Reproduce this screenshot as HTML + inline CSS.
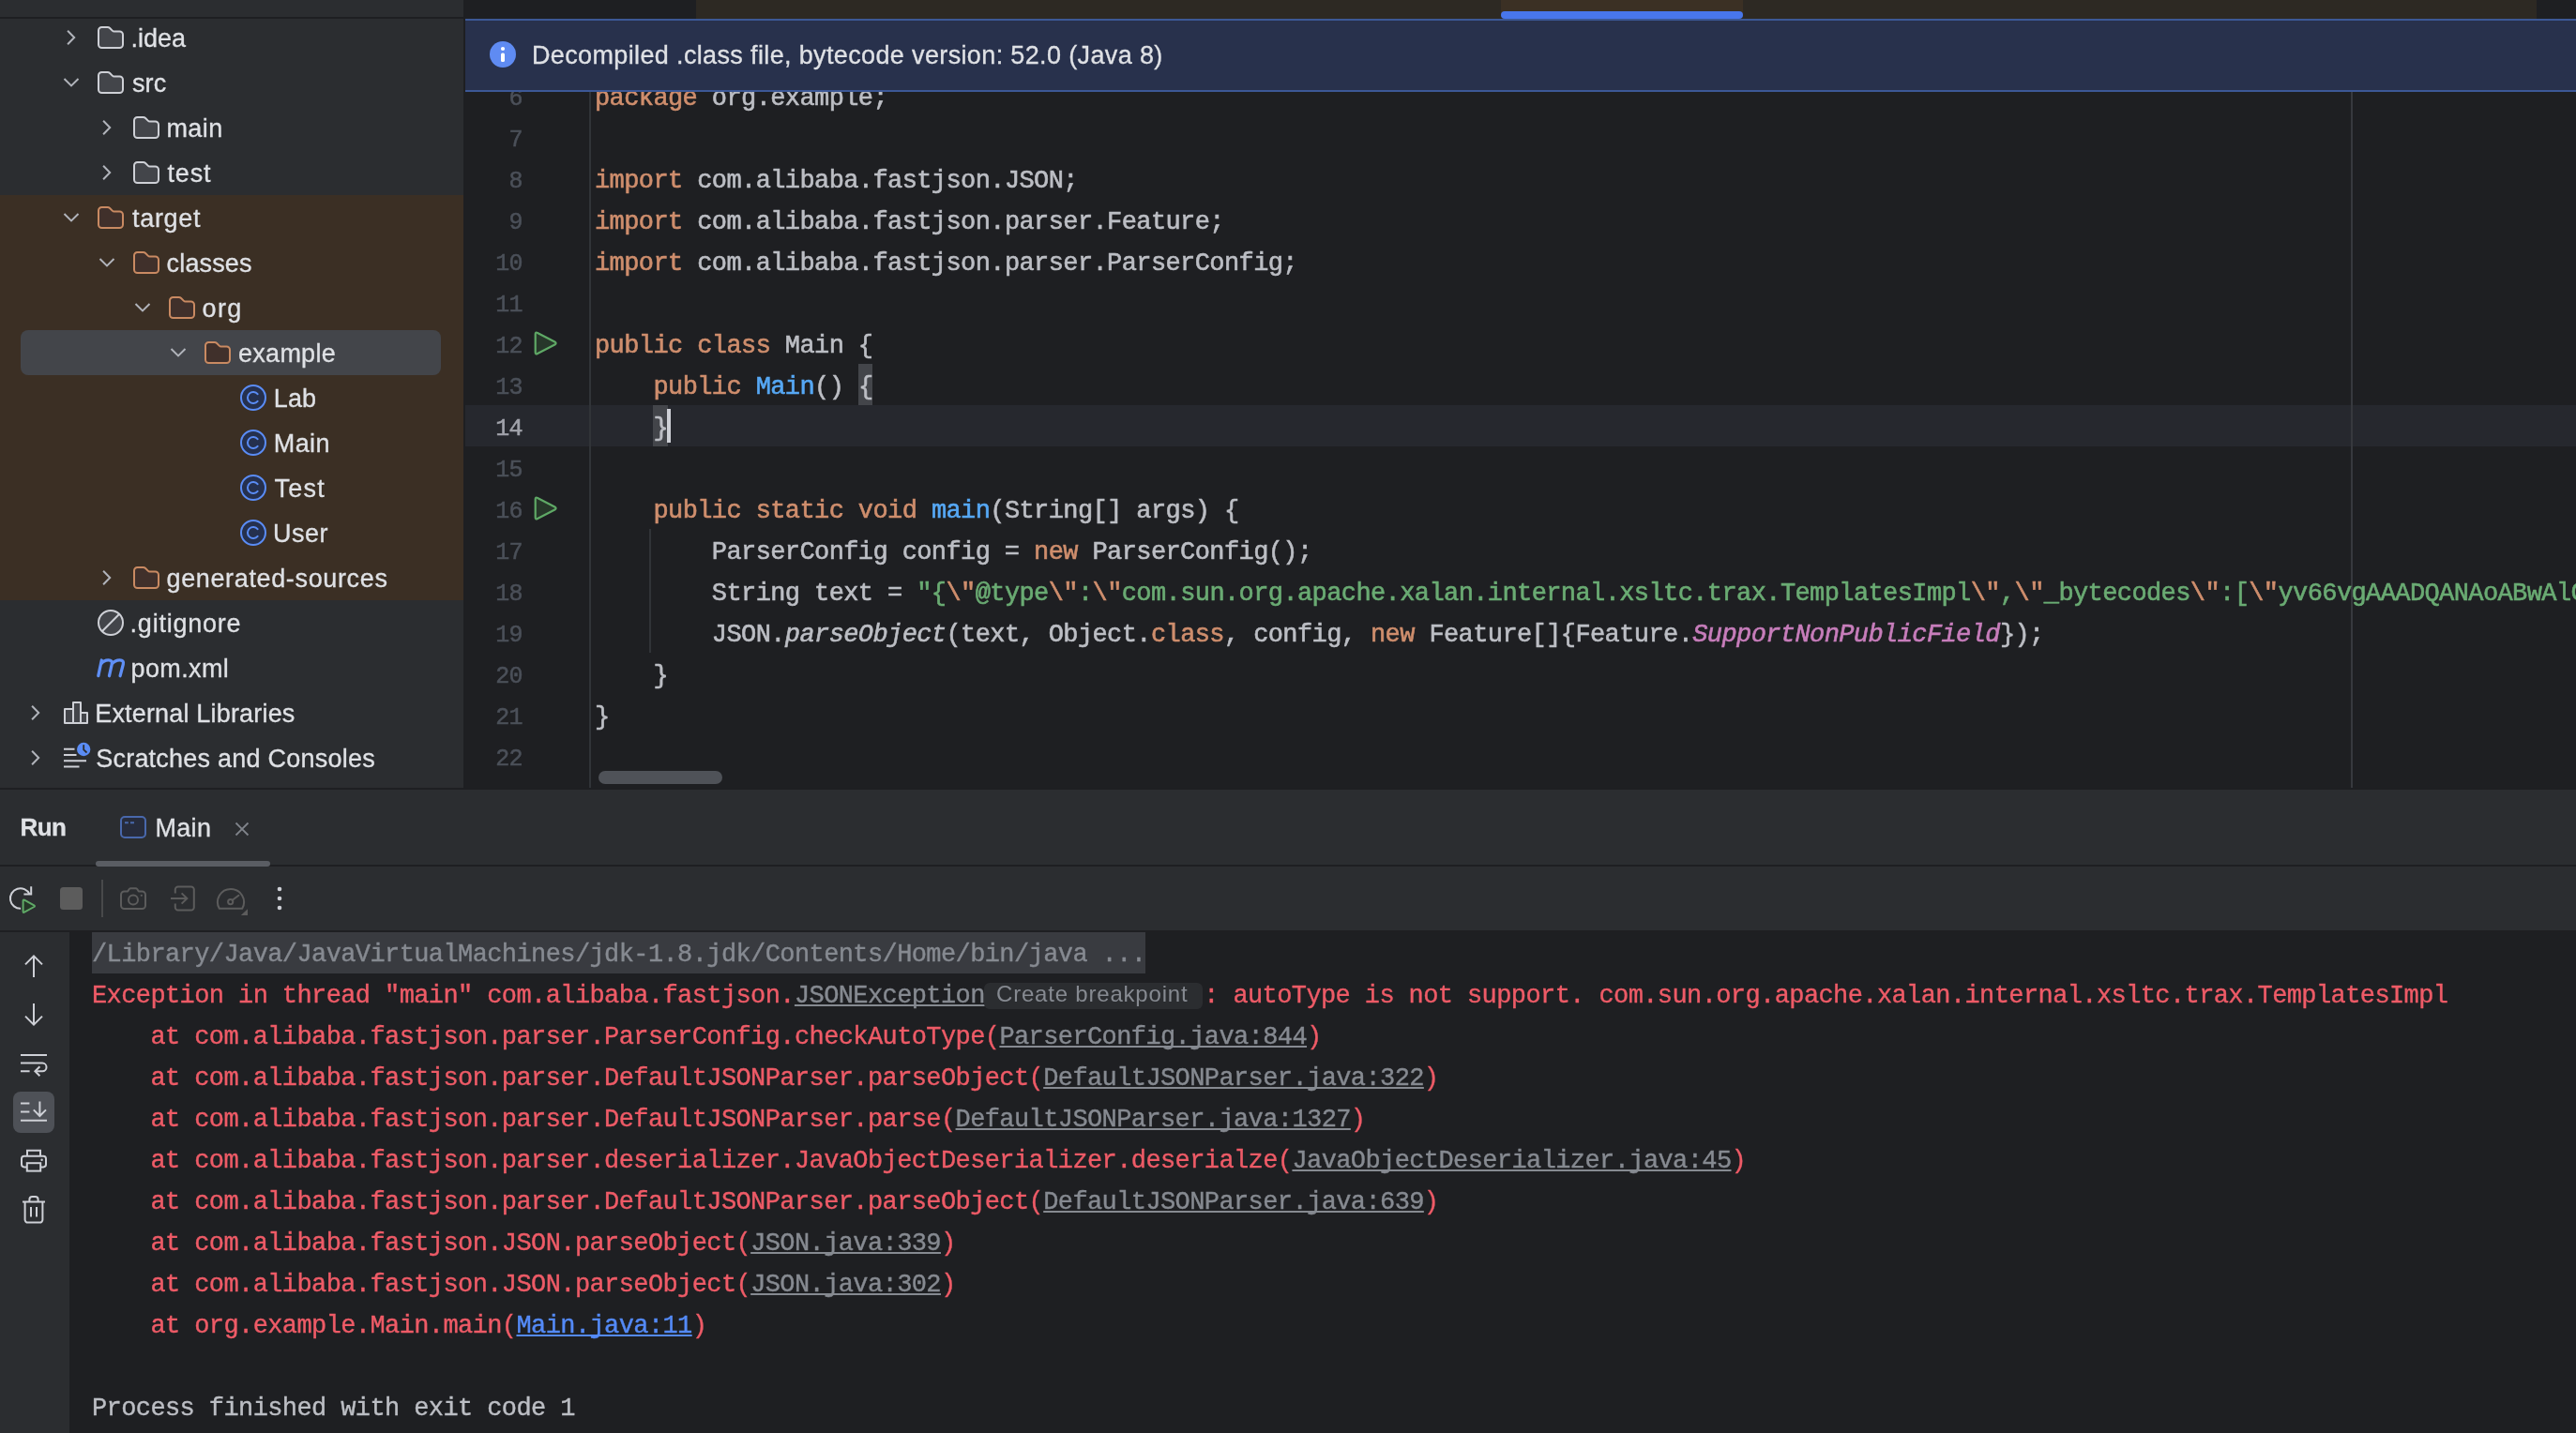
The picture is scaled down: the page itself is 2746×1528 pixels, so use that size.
<!DOCTYPE html><html><head><meta charset="utf-8"><title>IDE</title><style>
*{margin:0;padding:0;box-sizing:border-box}
html,body{width:2746px;height:1528px;overflow:hidden;background:#1e1f22}
body{position:relative;font-family:"Liberation Sans",sans-serif;color:#dfe1e5}
.abs{position:absolute}
.ui{font-family:"Liberation Sans",sans-serif;font-size:27px;-webkit-text-stroke:0.3px;color:#dfe1e5;white-space:pre;position:absolute;height:48px;line-height:48px}
svg{position:absolute;overflow:visible}
.cl{position:absolute;left:634px;height:44px;line-height:50px;font-family:"Liberation Mono",monospace;font-size:27px;letter-spacing:-0.6px;-webkit-text-stroke:0.6px;white-space:pre;color:#bcbec4}
.ln{position:absolute;left:496px;width:61px;text-align:right;height:44px;line-height:51.6px;font-family:"Liberation Mono",monospace;font-size:25px;letter-spacing:-0.6px;-webkit-text-stroke:0.5px;color:#4b5059;white-space:pre}
.k{color:#cf8e6d}.s{color:#6aab73}.f{color:#56a8f5}.p{color:#c77dbb;font-style:italic}.i{font-style:italic}
.co{position:absolute;left:98px;height:44px;line-height:49px;font-family:"Liberation Mono",monospace;font-size:27px;letter-spacing:-0.6px;-webkit-text-stroke:0.4px;white-space:pre;color:#ee5b67}
.lk{color:#868a91;text-decoration:underline;text-decoration-thickness:2px;text-underline-offset:2px;text-decoration-skip-ink:none}
.lb{color:#548af7;text-decoration:underline;text-decoration-thickness:2px;text-underline-offset:2px;text-decoration-skip-ink:none}
</style></head><body><div id="root" style="position:absolute;left:0;top:0;width:2746px;height:1528px;will-change:transform">
<div class="abs" style="left:0px;top:0px;width:494px;height:840px;background:#2b2d30;"></div>
<div class="abs" style="left:0px;top:18px;width:494px;height:2px;background:#1e1f22;"></div>
<div class="abs" style="left:0px;top:208px;width:494px;height:432px;background:#3b2f24;"></div>
<div class="abs" style="left:22px;top:352px;width:448px;height:48px;background:#43454a;border-radius:8px"></div>
<svg style="left:69.5px;top:30px" width="12" height="20" viewBox="0 0 12 20" ><path d="M2.1 2.7 L9.2 10 L2.1 17.3" fill="none" stroke="#b1b4bb" stroke-width="2" stroke-linecap="butt" stroke-linejoin="miter"/></svg>
<svg style="left:104px;top:28px" width="28" height="24" viewBox="0 0 28 24" ><path d="M1 4.5 A3.5 3.5 0 0 1 4.5 1 H10.6 A3.5 3.5 0 0 1 13.1 2 L15.7 4.6 A3 3 0 0 0 17.8 5.5 H23.5 A3.5 3.5 0 0 1 27 9 V19.5 A3.5 3.5 0 0 1 23.5 23 H4.5 A3.5 3.5 0 0 1 1 19.5 Z" fill="#43454a" stroke="#ced0d6" stroke-width="2" stroke-linejoin="round"/></svg>
<div class="ui" style="left:139.4px;top:17px;letter-spacing:0px;">.idea</div>
<svg style="left:66px;top:82px" width="20" height="12" viewBox="0 0 20 12" ><path d="M2.5 2 L10 9.4 L17.5 2" fill="none" stroke="#b1b4bb" stroke-width="2" stroke-linecap="butt" stroke-linejoin="miter"/></svg>
<svg style="left:104px;top:76px" width="28" height="24" viewBox="0 0 28 24" ><path d="M1 4.5 A3.5 3.5 0 0 1 4.5 1 H10.6 A3.5 3.5 0 0 1 13.1 2 L15.7 4.6 A3 3 0 0 0 17.8 5.5 H23.5 A3.5 3.5 0 0 1 27 9 V19.5 A3.5 3.5 0 0 1 23.5 23 H4.5 A3.5 3.5 0 0 1 1 19.5 Z" fill="#43454a" stroke="#ced0d6" stroke-width="2" stroke-linejoin="round"/></svg>
<div class="ui" style="left:141px;top:65px;letter-spacing:0.1px;">src</div>
<svg style="left:107.5px;top:126px" width="12" height="20" viewBox="0 0 12 20" ><path d="M2.1 2.7 L9.2 10 L2.1 17.3" fill="none" stroke="#b1b4bb" stroke-width="2" stroke-linecap="butt" stroke-linejoin="miter"/></svg>
<svg style="left:142px;top:124px" width="28" height="24" viewBox="0 0 28 24" ><path d="M1 4.5 A3.5 3.5 0 0 1 4.5 1 H10.6 A3.5 3.5 0 0 1 13.1 2 L15.7 4.6 A3 3 0 0 0 17.8 5.5 H23.5 A3.5 3.5 0 0 1 27 9 V19.5 A3.5 3.5 0 0 1 23.5 23 H4.5 A3.5 3.5 0 0 1 1 19.5 Z" fill="#43454a" stroke="#ced0d6" stroke-width="2" stroke-linejoin="round"/></svg>
<div class="ui" style="left:177.4px;top:113px;letter-spacing:0.47px;">main</div>
<svg style="left:107.5px;top:174px" width="12" height="20" viewBox="0 0 12 20" ><path d="M2.1 2.7 L9.2 10 L2.1 17.3" fill="none" stroke="#b1b4bb" stroke-width="2" stroke-linecap="butt" stroke-linejoin="miter"/></svg>
<svg style="left:142px;top:172px" width="28" height="24" viewBox="0 0 28 24" ><path d="M1 4.5 A3.5 3.5 0 0 1 4.5 1 H10.6 A3.5 3.5 0 0 1 13.1 2 L15.7 4.6 A3 3 0 0 0 17.8 5.5 H23.5 A3.5 3.5 0 0 1 27 9 V19.5 A3.5 3.5 0 0 1 23.5 23 H4.5 A3.5 3.5 0 0 1 1 19.5 Z" fill="#43454a" stroke="#ced0d6" stroke-width="2" stroke-linejoin="round"/></svg>
<div class="ui" style="left:178.4px;top:161px;letter-spacing:0.87px;">test</div>
<svg style="left:66px;top:226px" width="20" height="12" viewBox="0 0 20 12" ><path d="M2.5 2 L10 9.4 L17.5 2" fill="none" stroke="#b1b4bb" stroke-width="2" stroke-linecap="butt" stroke-linejoin="miter"/></svg>
<svg style="left:104px;top:220px" width="28" height="24" viewBox="0 0 28 24" ><path d="M1 4.5 A3.5 3.5 0 0 1 4.5 1 H10.6 A3.5 3.5 0 0 1 13.1 2 L15.7 4.6 A3 3 0 0 0 17.8 5.5 H23.5 A3.5 3.5 0 0 1 27 9 V19.5 A3.5 3.5 0 0 1 23.5 23 H4.5 A3.5 3.5 0 0 1 1 19.5 Z" fill="#40302b" stroke="#c98a62" stroke-width="2" stroke-linejoin="round"/></svg>
<div class="ui" style="left:141px;top:209px;letter-spacing:0.68px;">target</div>
<svg style="left:104px;top:274px" width="20" height="12" viewBox="0 0 20 12" ><path d="M2.5 2 L10 9.4 L17.5 2" fill="none" stroke="#b1b4bb" stroke-width="2" stroke-linecap="butt" stroke-linejoin="miter"/></svg>
<svg style="left:142px;top:268px" width="28" height="24" viewBox="0 0 28 24" ><path d="M1 4.5 A3.5 3.5 0 0 1 4.5 1 H10.6 A3.5 3.5 0 0 1 13.1 2 L15.7 4.6 A3 3 0 0 0 17.8 5.5 H23.5 A3.5 3.5 0 0 1 27 9 V19.5 A3.5 3.5 0 0 1 23.5 23 H4.5 A3.5 3.5 0 0 1 1 19.5 Z" fill="#40302b" stroke="#c98a62" stroke-width="2" stroke-linejoin="round"/></svg>
<div class="ui" style="left:177.6px;top:257px;letter-spacing:0.15px;">classes</div>
<svg style="left:142px;top:322px" width="20" height="12" viewBox="0 0 20 12" ><path d="M2.5 2 L10 9.4 L17.5 2" fill="none" stroke="#b1b4bb" stroke-width="2" stroke-linecap="butt" stroke-linejoin="miter"/></svg>
<svg style="left:180px;top:316px" width="28" height="24" viewBox="0 0 28 24" ><path d="M1 4.5 A3.5 3.5 0 0 1 4.5 1 H10.6 A3.5 3.5 0 0 1 13.1 2 L15.7 4.6 A3 3 0 0 0 17.8 5.5 H23.5 A3.5 3.5 0 0 1 27 9 V19.5 A3.5 3.5 0 0 1 23.5 23 H4.5 A3.5 3.5 0 0 1 1 19.5 Z" fill="#40302b" stroke="#c98a62" stroke-width="2" stroke-linejoin="round"/></svg>
<div class="ui" style="left:215.5px;top:305px;letter-spacing:1.4px;">org</div>
<svg style="left:180px;top:370px" width="20" height="12" viewBox="0 0 20 12" ><path d="M2.5 2 L10 9.4 L17.5 2" fill="none" stroke="#b1b4bb" stroke-width="2" stroke-linecap="butt" stroke-linejoin="miter"/></svg>
<svg style="left:218px;top:364px" width="28" height="24" viewBox="0 0 28 24" ><path d="M1 4.5 A3.5 3.5 0 0 1 4.5 1 H10.6 A3.5 3.5 0 0 1 13.1 2 L15.7 4.6 A3 3 0 0 0 17.8 5.5 H23.5 A3.5 3.5 0 0 1 27 9 V19.5 A3.5 3.5 0 0 1 23.5 23 H4.5 A3.5 3.5 0 0 1 1 19.5 Z" fill="#40302b" stroke="#c98a62" stroke-width="2" stroke-linejoin="round"/></svg>
<div class="ui" style="left:254.1px;top:353px;letter-spacing:0.25px;">example</div>
<svg style="left:256px;top:410px" width="28" height="28" viewBox="0 0 28 28" ><circle cx="14" cy="14" r="13" fill="#25304e" stroke="#5a8cf5" stroke-width="2"/><path d="M18.6 10.2 A6 6 0 1 0 18.6 17.8" fill="none" stroke="#5a8cf5" stroke-width="2" stroke-linecap="round"/></svg>
<div class="ui" style="left:291.7px;top:401px;letter-spacing:0.2px;">Lab</div>
<svg style="left:256px;top:458px" width="28" height="28" viewBox="0 0 28 28" ><circle cx="14" cy="14" r="13" fill="#25304e" stroke="#5a8cf5" stroke-width="2"/><path d="M18.6 10.2 A6 6 0 1 0 18.6 17.8" fill="none" stroke="#5a8cf5" stroke-width="2" stroke-linecap="round"/></svg>
<div class="ui" style="left:291.7px;top:449px;letter-spacing:0.45px;">Main</div>
<svg style="left:256px;top:506px" width="28" height="28" viewBox="0 0 28 28" ><circle cx="14" cy="14" r="13" fill="#25304e" stroke="#5a8cf5" stroke-width="2"/><path d="M18.6 10.2 A6 6 0 1 0 18.6 17.8" fill="none" stroke="#5a8cf5" stroke-width="2" stroke-linecap="round"/></svg>
<div class="ui" style="left:292.5px;top:497px;letter-spacing:1.23px;">Test</div>
<svg style="left:256px;top:554px" width="28" height="28" viewBox="0 0 28 28" ><circle cx="14" cy="14" r="13" fill="#25304e" stroke="#5a8cf5" stroke-width="2"/><path d="M18.6 10.2 A6 6 0 1 0 18.6 17.8" fill="none" stroke="#5a8cf5" stroke-width="2" stroke-linecap="round"/></svg>
<div class="ui" style="left:291px;top:545px;letter-spacing:0.5px;">User</div>
<svg style="left:107.5px;top:606px" width="12" height="20" viewBox="0 0 12 20" ><path d="M2.1 2.7 L9.2 10 L2.1 17.3" fill="none" stroke="#b1b4bb" stroke-width="2" stroke-linecap="butt" stroke-linejoin="miter"/></svg>
<svg style="left:142px;top:604px" width="28" height="24" viewBox="0 0 28 24" ><path d="M1 4.5 A3.5 3.5 0 0 1 4.5 1 H10.6 A3.5 3.5 0 0 1 13.1 2 L15.7 4.6 A3 3 0 0 0 17.8 5.5 H23.5 A3.5 3.5 0 0 1 27 9 V19.5 A3.5 3.5 0 0 1 23.5 23 H4.5 A3.5 3.5 0 0 1 1 19.5 Z" fill="#40302b" stroke="#c98a62" stroke-width="2" stroke-linejoin="round"/></svg>
<div class="ui" style="left:177.5px;top:593px;letter-spacing:0.64px;">generated-sources</div>
<svg style="left:104px;top:650px" width="28" height="28" viewBox="0 0 28 28" ><circle cx="14" cy="14" r="13" fill="#43454a" stroke="#ced0d6" stroke-width="2"/><path d="M4.8 23.2 L23.2 4.8" stroke="#ced0d6" stroke-width="2"/></svg>
<div class="ui" style="left:138.6px;top:641px;letter-spacing:0.76px;">.gitignore</div>
<svg style="left:102px;top:700px" width="34" height="24" viewBox="0 0 34 24" ><path d="M2.8 20.7 L6.3 4 M5.5 8.2 C7.5 5.4 10.5 3.8 13.6 3.8 C16.6 3.8 17.9 5.5 17.2 8.4 L14.5 20.7 M17.3 8 C19.3 5.4 22.5 3.8 25.7 3.8 C28.8 3.8 30 5.5 29.3 8.4 L26.1 20.7" fill="none" stroke="#5f8ff6" stroke-width="3.3" stroke-linecap="round" stroke-linejoin="round"/></svg>
<div class="ui" style="left:139.6px;top:689px;letter-spacing:0.37px;">pom.xml</div>
<svg style="left:31.5px;top:750px" width="12" height="20" viewBox="0 0 12 20" ><path d="M2.1 2.7 L9.2 10 L2.1 17.3" fill="none" stroke="#b1b4bb" stroke-width="2" stroke-linecap="butt" stroke-linejoin="miter"/></svg>
<svg style="left:68px;top:748px" width="26" height="24" viewBox="0 0 26 24" ><path d="M1 8 H10 V23 H1 Z M10 1 H18 V23 H10 Z M18 12 H25 V23 H18 Z" fill="#43454a" stroke="#ced0d6" stroke-width="2" stroke-linejoin="round"/></svg>
<div class="ui" style="left:101.2px;top:737px;letter-spacing:0.18px;">External Libraries</div>
<svg style="left:31.5px;top:798px" width="12" height="20" viewBox="0 0 12 20" ><path d="M2.1 2.7 L9.2 10 L2.1 17.3" fill="none" stroke="#b1b4bb" stroke-width="2" stroke-linecap="butt" stroke-linejoin="miter"/></svg>
<svg style="left:68px;top:790px" width="30" height="30" viewBox="0 0 30 30" ><path d="M0 8.8 H11.5 M0 15 H13.5 M0 21.2 H24 M0 27.4 H16.5" stroke="#ced0d6" stroke-width="2" fill="none"/><circle cx="21.2" cy="9" r="7.2" fill="#5a8cf5"/><path d="M21.2 4.8 V9.4 L24 12" stroke="#2b2d30" stroke-width="1.8" fill="none" stroke-linecap="round"/></svg>
<div class="ui" style="left:102.2px;top:785px;letter-spacing:0.23px;">Scratches and Consoles</div>
<div class="abs" style="left:494px;top:0px;width:2252px;height:840px;background:#1e1f22;"></div>
<div class="abs" style="left:742px;top:0px;width:1962px;height:20px;background:#2d2923;"></div>
<div class="abs" style="left:1600px;top:0px;width:258px;height:14px;background:#3b3024;"></div>
<div class="abs" style="left:1600px;top:12px;width:258px;height:8px;background:#4876eb;border-radius:4px"></div>
<div class="abs" style="left:496px;top:432px;width:2250px;height:44px;background:#26282e;"></div>
<div class="abs" style="left:628px;top:98px;width:2px;height:742px;background:#313438;"></div>
<div class="abs" style="left:2506px;top:98px;width:2px;height:742px;background:#37393e;"></div>
<div class="abs" style="left:692px;top:564px;width:2px;height:132px;background:#313438;"></div>
<div class="abs" style="left:914.8px;top:388px;width:15.6px;height:44px;background:#43454a;"></div>
<div class="abs" style="left:696.4px;top:432px;width:15.6px;height:44px;background:#43454a;"></div>
<div class="abs" style="left:496px;top:80px;width:2250px;height:760px;overflow:hidden">
<div class="ln" style="left:0;top:0px">6</div>
<div class="cl" style="left:138px;top:0px"><span class="k">package</span> org.example;</div>
<div class="ln" style="left:0;top:44px">7</div>
<div class="ln" style="left:0;top:88px">8</div>
<div class="cl" style="left:138px;top:88px"><span class="k">import</span> com.alibaba.fastjson.JSON;</div>
<div class="ln" style="left:0;top:132px">9</div>
<div class="cl" style="left:138px;top:132px"><span class="k">import</span> com.alibaba.fastjson.parser.Feature;</div>
<div class="ln" style="left:0;top:176px">10</div>
<div class="cl" style="left:138px;top:176px"><span class="k">import</span> com.alibaba.fastjson.parser.ParserConfig;</div>
<div class="ln" style="left:0;top:220px">11</div>
<div class="ln" style="left:0;top:264px">12</div>
<div class="cl" style="left:138px;top:264px"><span class="k">public class</span> Main {</div>
<div class="ln" style="left:0;top:308px">13</div>
<div class="cl" style="left:138px;top:308px">    <span class="k">public</span> <span class="f">Main</span>() {</div>
<div class="ln" style="left:0;top:352px;color:#a1a3ab">14</div>
<div class="cl" style="left:138px;top:352px">    }</div>
<div class="ln" style="left:0;top:396px">15</div>
<div class="ln" style="left:0;top:440px">16</div>
<div class="cl" style="left:138px;top:440px">    <span class="k">public static void</span> <span class="f">main</span>(String[] args) {</div>
<div class="ln" style="left:0;top:484px">17</div>
<div class="cl" style="left:138px;top:484px">        ParserConfig config = <span class="k">new</span> ParserConfig();</div>
<div class="ln" style="left:0;top:528px">18</div>
<div class="cl" style="left:138px;top:528px">        String text = <span class="s">&quot;{</span><span class="k">\&quot;</span><span class="s">@type</span><span class="k">\&quot;</span><span class="s">:</span><span class="k">\&quot;</span><span class="s">com.sun.org.apache.xalan.internal.xsltc.trax.TemplatesImpl</span><span class="k">\&quot;</span><span class="s">,</span><span class="k">\&quot;</span><span class="s">_bytecodes</span><span class="k">\&quot;</span><span class="s">:[</span><span class="k">\&quot;</span><span class="s">yv66vgAAADQANAoABwAlCgAmACcHACgK</span></div>
<div class="ln" style="left:0;top:572px">19</div>
<div class="cl" style="left:138px;top:572px">        JSON.<span class="i">parseObject</span>(text, Object.<span class="k">class</span>, config, <span class="k">new</span> Feature[]{Feature.<span class="p">SupportNonPublicField</span>});</div>
<div class="ln" style="left:0;top:616px">20</div>
<div class="cl" style="left:138px;top:616px">    }</div>
<div class="ln" style="left:0;top:660px">21</div>
<div class="cl" style="left:138px;top:660px">}</div>
<div class="ln" style="left:0;top:704px">22</div>
</div>
<div class="abs" style="left:711px;top:436px;width:4px;height:36px;background:#ced0d6;"></div>
<svg style="left:569px;top:352px" width="26" height="28" viewBox="0 0 26 28" ><path d="M4 2.9 Q1.7 1.7 1.7 4.2 V23.8 Q1.7 26.3 4 25.1 L22.4 15.6 Q24.8 14 22.4 12.4 Z" fill="#27372a" stroke="#5fa966" stroke-width="2.2" stroke-linejoin="round"/></svg>
<svg style="left:569px;top:528px" width="26" height="28" viewBox="0 0 26 28" ><path d="M4 2.9 Q1.7 1.7 1.7 4.2 V23.8 Q1.7 26.3 4 25.1 L22.4 15.6 Q24.8 14 22.4 12.4 Z" fill="#27372a" stroke="#5fa966" stroke-width="2.2" stroke-linejoin="round"/></svg>
<div class="abs" style="left:638px;top:822px;width:132px;height:14px;background:#4f5258;border-radius:7px"></div>
<div class="abs" style="left:496px;top:20px;width:2250px;height:78px;background:#28314c;border-top:2px solid #3c5896;border-bottom:2px solid #3c5896"></div>
<svg style="left:522px;top:44px" width="28" height="28" viewBox="0 0 28 28" ><circle cx="14" cy="14" r="14" fill="#5f8bf2"/><circle cx="14" cy="8" r="2.1" fill="#fff"/><rect x="12" y="12.6" width="4" height="9.4" rx="1.6" fill="#fff"/></svg>
<div class="ui" style="left:567px;top:35px;letter-spacing:0.36px">Decompiled .class file, bytecode version: 52.0 (Java 8)</div>
<div class="abs" style="left:0px;top:840px;width:2746px;height:2px;background:#1e1f22;"></div>
<div class="abs" style="left:0px;top:842px;width:2746px;height:152px;background:#2b2d30;"></div>
<div class="abs" style="left:0px;top:922px;width:2746px;height:2px;background:#1e1f22;"></div>
<div class="abs" style="left:0px;top:992px;width:2746px;height:2px;background:#1e1f22;"></div>
<div class="abs" style="left:0px;top:994px;width:74px;height:534px;background:#2b2d30;"></div>
<div class="ui" style="left:21.5px;top:858px;font-weight:bold;font-size:26px;letter-spacing:-0.6px">Run</div>
<svg style="left:128px;top:870px" width="28" height="24" viewBox="0 0 28 24" ><rect x="1" y="1" width="26" height="22" rx="4" fill="#272c3c" stroke="#4968ac" stroke-width="2"/><path d="M5 7.2 H8.8 M11 7.2 H15" stroke="#4968ac" stroke-width="2"/></svg>
<div class="ui" style="left:165.5px;top:859px;letter-spacing:0.3px">Main</div>
<svg style="left:250px;top:876px" width="16" height="16" viewBox="0 0 16 16" ><path d="M1.5 1.5 L14.5 14.5 M14.5 1.5 L1.5 14.5" stroke="#80848b" stroke-width="1.8" fill="none"/></svg>
<div class="abs" style="left:102px;top:918px;width:186px;height:6px;background:#5a5d63;border-radius:3px"></div>
<svg style="left:8px;top:942px" width="34" height="34" viewBox="0 0 34 34" ><path d="M23.5 11.4 A10.8 10.8 0 1 0 14.1 26.8" fill="none" stroke="#ced0d6" stroke-width="2"/><path d="M17.4 11.4 H25.2 V3.2" fill="none" stroke="#ced0d6" stroke-width="2"/><path d="M18 17.7 Q16.6 17 16.6 18.6 V29.8 Q16.6 31.4 18 30.7 L28.3 25 Q29.6 24.2 28.3 23.4 Z" fill="#253627" stroke="#5fa966" stroke-width="2" stroke-linejoin="round"/></svg>
<div class="abs" style="left:64px;top:946px;width:24px;height:24px;background:#5c5c5c;border-radius:3.5px"></div>
<div class="abs" style="left:108px;top:938px;width:2px;height:40px;background:#48494b;"></div>
<svg style="left:128px;top:946px" width="28" height="24" viewBox="0 0 28 24" ><path d="M4.5 4.4 H8.2 L9.8 2 A2 2 0 0 1 11.4 1.2 H16.6 A2 2 0 0 1 18.2 2 L19.8 4.4 H23.5 A3.5 3.5 0 0 1 27 7.9 V19.5 A3.5 3.5 0 0 1 23.5 23 H4.5 A3.5 3.5 0 0 1 1 19.5 V7.9 A3.5 3.5 0 0 1 4.5 4.4 Z" fill="none" stroke="#5c5c5c" stroke-width="2" stroke-linejoin="round"/><circle cx="14" cy="13.6" r="5" fill="none" stroke="#5c5c5c" stroke-width="2"/><circle cx="22.8" cy="8.8" r="1.1" fill="#5c5c5c"/></svg>
<svg style="left:181px;top:944px" width="28" height="28" viewBox="0 0 28 28" ><path d="M5.8 8.5 V4.5 A3 3 0 0 1 8.8 1.5 H22.8 A3 3 0 0 1 25.8 4.5 V23.5 A3 3 0 0 1 22.8 26.5 H8.8 A3 3 0 0 1 5.8 23.5 V19.5" fill="none" stroke="#5c5c5c" stroke-width="2"/><path d="M1 14 H18 M12.6 8.4 L18.4 14 L12.6 19.6" fill="none" stroke="#5c5c5c" stroke-width="2"/></svg>
<svg style="left:230px;top:946px" width="36" height="32" viewBox="0 0 36 32" ><path d="M3.8 22.8 A14 14 0 1 1 28.2 22.8 Z" fill="none" stroke="#5c5c5c" stroke-width="2" stroke-linejoin="round"/><circle cx="15.7" cy="15.6" r="2.6" fill="none" stroke="#5c5c5c" stroke-width="2"/><path d="M17.8 13.8 L24.4 8.8" stroke="#5c5c5c" stroke-width="2" stroke-linecap="round"/><path d="M34 23.2 V30 H26.8 Z" fill="#5c5c5c"/></svg>
<svg style="left:294px;top:944px" width="8" height="28" viewBox="0 0 8 28" ><circle cx="4" cy="4" r="2.3" fill="#ced0d6"/><circle cx="4" cy="14" r="2.3" fill="#ced0d6"/><circle cx="4" cy="24" r="2.3" fill="#ced0d6"/></svg>
<svg style="left:24px;top:1017px" width="24" height="26" viewBox="0 0 24 26" ><path d="M12 25 V3 M3 11.4 L12 2.4 L21 11.4" fill="none" stroke="#ced0d6" stroke-width="2"/></svg>
<svg style="left:24px;top:1069px" width="24" height="26" viewBox="0 0 24 26" ><path d="M12 1 V23 M3 14.6 L12 23.6 L21 14.6" fill="none" stroke="#ced0d6" stroke-width="2"/></svg>
<svg style="left:21px;top:1122px" width="30" height="28" viewBox="0 0 30 28" ><path d="M1 3 H29 M1 20.2 H10.6" fill="none" stroke="#ced0d6" stroke-width="2"/><path d="M17 20.2 H24.2 A4.3 4.3 0 0 0 24.2 11.6 H1" fill="none" stroke="#ced0d6" stroke-width="2"/><path d="M21.4 15.2 L16.4 20.2 L21.4 25.2" fill="none" stroke="#ced0d6" stroke-width="2"/></svg>
<div class="abs" style="left:14px;top:1164px;width:44px;height:44px;background:#4e5157;border-radius:8px"></div>
<svg style="left:21px;top:1174px" width="30" height="24" viewBox="0 0 30 24" ><path d="M1 2.4 H10.4 M1 11.6 H10.4 M1 20.8 H29" fill="none" stroke="#ced0d6" stroke-width="2"/><path d="M21.4 0.6 V15.6 M14.8 9.4 L21.4 16 L28 9.4" fill="none" stroke="#ced0d6" stroke-width="2"/></svg>
<svg style="left:21px;top:1225px" width="30" height="26" viewBox="0 0 30 26" ><path d="M8 7.6 V1.8 H22 V7.6" fill="none" stroke="#ced0d6" stroke-width="2"/><path d="M7.6 19.4 H4.8 A2.8 2.8 0 0 1 2 16.6 V10.6 A2.8 2.8 0 0 1 4.8 7.8 H25.2 A2.8 2.8 0 0 1 28 10.6 V16.6 A2.8 2.8 0 0 1 25.2 19.4 H22.4" fill="none" stroke="#ced0d6" stroke-width="2"/><rect x="7.8" y="15.2" width="14.4" height="8.4" fill="none" stroke="#ced0d6" stroke-width="2"/><circle cx="23.6" cy="11.8" r="1.2" fill="#ced0d6"/></svg>
<svg style="left:23px;top:1275px" width="26" height="30" viewBox="0 0 26 30" ><path d="M1 6.4 H25 M8.4 6 V4 A3 3 0 0 1 11.4 1 H14.6 A3 3 0 0 1 17.6 4 V6" fill="none" stroke="#ced0d6" stroke-width="2"/><path d="M3.6 6.4 V25.6 A3 3 0 0 0 6.6 28.6 H19.4 A3 3 0 0 0 22.4 25.6 V6.4" fill="none" stroke="#ced0d6" stroke-width="2"/><path d="M10 12 V22.4 M16 12 V22.4" fill="none" stroke="#ced0d6" stroke-width="2"/></svg>
<div class="abs" style="left:98px;top:994px;width:1123px;height:44px;background:#393b40;"></div>
<div class="co" style="top:994px"><span style="color:#868a91">/Library/Java/JavaVirtualMachines/jdk-1.8.jdk/Contents/Home/bin/java ...</span></div>
<div class="co" style="top:1038px">Exception in thread &quot;main&quot; com.alibaba.fastjson.<span class="lk">JSONException</span><span style="display:inline-block;width:233.4px"></span>: autoType is not support. com.sun.org.apache.xalan.internal.xsltc.trax.TemplatesImpl</div>
<div class="co" style="top:1082px">    at com.alibaba.fastjson.parser.ParserConfig.checkAutoType(<span class="lk">ParserConfig.java:844</span>)</div>
<div class="co" style="top:1126px">    at com.alibaba.fastjson.parser.DefaultJSONParser.parseObject(<span class="lk">DefaultJSONParser.java:322</span>)</div>
<div class="co" style="top:1170px">    at com.alibaba.fastjson.parser.DefaultJSONParser.parse(<span class="lk">DefaultJSONParser.java:1327</span>)</div>
<div class="co" style="top:1214px">    at com.alibaba.fastjson.parser.deserializer.JavaObjectDeserializer.deserialze(<span class="lk">JavaObjectDeserializer.java:45</span>)</div>
<div class="co" style="top:1258px">    at com.alibaba.fastjson.parser.DefaultJSONParser.parseObject(<span class="lk">DefaultJSONParser.java:639</span>)</div>
<div class="co" style="top:1302px">    at com.alibaba.fastjson.JSON.parseObject(<span class="lk">JSON.java:339</span>)</div>
<div class="co" style="top:1346px">    at com.alibaba.fastjson.JSON.parseObject(<span class="lk">JSON.java:302</span>)</div>
<div class="co" style="top:1390px">    at org.example.Main.main(<span class="lb">Main.java:11</span>)</div>
<div class="co" style="top:1478px"><span style="color:#bcbec4">Process finished with exit code 1</span></div>
<div class="abs" style="left:1048.5px;top:1048px;width:233.5px;height:28px;background:#2b2d30;border-radius:6px"></div>
<div class="abs" style="left:1062px;top:1045px;height:28px;line-height:30px;font-size:24px;letter-spacing:0.8px;color:#868a91;white-space:pre">Create breakpoint</div>
</div></body></html>
